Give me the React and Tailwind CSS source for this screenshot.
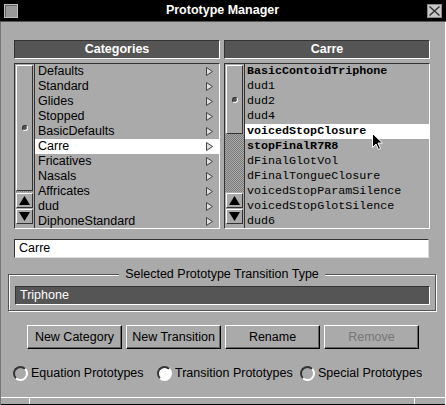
import { useState } from 'react'

const categories = [
  'Defaults',
  'Standard',
  'Glides',
  'Stopped',
  'BasicDefaults',
  'Carre',
  'Fricatives',
  'Nasals',
  'Affricates',
  'dud',
  'DiphoneStandard'
]

const transitions = [
  { name: 'BasicContoidTriphone', bold: true },
  { name: 'dud1' },
  { name: 'dud2' },
  { name: 'dud4' },
  { name: 'voicedStopClosure', bold: true },
  { name: 'stopFinalR7R8', bold: true },
  { name: 'dFinalGlotVol' },
  { name: 'dFinalTongueClosure' },
  { name: 'voicedStopParamSilence' },
  { name: 'voicedStopGlotSilence' },
  { name: 'dud6' }
]

const raised = 'border border-t-white border-l-white border-r-[#333] border-b-[#333]'
const sunken = 'border border-t-[#333] border-l-[#333] border-r-white border-b-white'

function ThumbDot() {
  return (
    <div className="w-[6px] h-[6px] rounded-full bg-[#555] border border-t-[#333] border-l-[#333] border-r-white border-b-white" />
  )
}

function ArrowButton({ down }) {
  return (
    <div className={`h-[15px] mt-[1px] mx-[1px] bg-[#aaa] flex items-center justify-center ${raised}`}>
      <svg width="11" height="9" viewBox="0 0 11 9">
        {down ? <path d="M0 0 H11 L5.5 9 Z" fill="#000" /> : <path d="M0 9 H11 L5.5 0 Z" fill="#000" />}
      </svg>
    </div>
  )
}

function SubArrow() {
  return (
    <svg width="7" height="9" viewBox="0 0 7 9">
      <path d="M0.5 0.5 L6.5 4.5 L0.5 8.5 Z" fill="#ddd" stroke="#444" strokeWidth="1" />
    </svg>
  )
}

function ScrollColumn({ thumb }) {
  return (
    <div className="w-[20px] shrink-0 flex flex-col border-r border-[#333] pb-[4px]">
      <div className={`${thumb} mt-[1px] mx-[1px] bg-[#aaa] flex items-center justify-center ${raised}`}>
        <ThumbDot />
      </div>
      <div className="flex-1 bg-[image:repeating-conic-gradient(#7a7a7a_0_25%,#aaa_0_50%)] bg-size-[2px_2px]" />
      <ArrowButton />
      <ArrowButton down />
    </div>
  )
}

export default function App() {
  const [category, setCategory] = useState('Carre')
  const [transition, setTransition] = useState('voicedStopClosure')
  const [mode, setMode] = useState('transition')

  return (
    <div className="w-[446px] h-[405px] bg-[#aaa] flex flex-col font-['Liberation_Sans',sans-serif] text-black relative overflow-hidden">
      {/* Title bar */}
      <div className="h-[22px] shrink-0 bg-black flex items-center px-[4px] border-b border-[#555]">
        <div className="w-[14px] h-[14px] border border-[#bbb] bg-[#999] shadow-[inset_1px_1px_0_#666]" />
        <div className="flex-1 text-center text-white font-bold text-[12.5px] leading-none">Prototype Manager</div>
        <div className="w-[15px] h-[14px] bg-[#c8c8c8] border border-[#888] flex items-center justify-center">
          <svg width="11" height="10" viewBox="0 0 11 10">
            <path d="M0.5 0.5 L10.5 9.5 M10.5 0.5 L0.5 9.5" stroke="#333" strokeWidth="1.4" />
          </svg>
        </div>
      </div>

      <div className="flex-1 flex flex-col border-l border-[#777] border-r border-r-white">
        {/* Lists */}
        <div className="flex gap-[4px] pl-[13px] mt-[18px]">
          <div className="w-[206px] flex flex-col">
            <div className={`h-[19px] bg-[#555] text-white font-bold text-[12.5px] flex items-center justify-center ${sunken}`}>
              Categories
            </div>
            <div className={`mt-[4px] h-[166px] flex ${sunken}`}>
              <ScrollColumn thumb="h-[126px]" />
              <div className="flex-1 overflow-hidden">
                {categories.map((c) => (
                  <div
                    key={c}
                    onClick={() => setCategory(c)}
                    className={`h-[15px] shrink-0 flex items-center justify-between pl-[3px] pr-[6px] text-[12.5px] leading-[15px] ${
                      category === c ? 'bg-white' : ''
                    }`}
                  >
                    <span>{c}</span>
                    <SubArrow />
                  </div>
                ))}
              </div>
            </div>
          </div>

          <div className="w-[206px] flex flex-col">
            <div className={`h-[19px] bg-[#555] text-white font-bold text-[12.5px] flex items-center justify-center ${sunken}`}>
              {category}
            </div>
            <div className={`mt-[4px] h-[166px] flex ${sunken}`}>
              <ScrollColumn thumb="h-[69px]" />
              <div className="flex-1 overflow-hidden font-['Liberation_Mono',monospace] text-[11.7px]">
                {transitions.map((t) => (
                  <div
                    key={t.name}
                    onClick={() => setTransition(t.name)}
                    className={`h-[15px] flex items-center pl-[2px] leading-[15px] ${t.bold ? 'font-bold' : ''} ${
                      transition === t.name ? 'bg-white' : ''
                    }`}
                  >
                    {t.name}
                  </div>
                ))}
              </div>
            </div>
          </div>
        </div>

        {/* Name field */}
        <div className="ml-[13px] mt-[10px] w-[415px] h-[19px] bg-white border border-t-[#333] border-l-[#333] border-r-[#ddd] border-b-[#ddd] flex items-center pl-[4px] text-[12.5px]">
          {category}
        </div>

        {/* Group box */}
        <div className="relative ml-[7px] mt-[16px] w-[428px] h-[37px] border border-[#555] shadow-[inset_1px_1px_0_#fff,1px_1px_0_#fff] pt-[11px] pl-[6px]">
          <div className="absolute -top-[8px] left-0 right-0 flex justify-center">
            <span className="bg-[#aaa] px-[6px] text-[12.5px] leading-[15px]">Selected Prototype Transition Type</span>
          </div>
          <div className={`w-[415px] h-[19px] bg-[#555] text-white flex items-center pl-[4px] text-[12.5px] ${sunken}`}>
            Triphone
          </div>
        </div>

        {/* Buttons */}
        <div className="flex justify-center gap-[4px] mt-[14px]">
          {['New Category', 'New Transition', 'Rename', 'Remove'].map((b) => (
            <button
              key={b}
              className={`w-[95px] h-[24px] bg-[#aaa] text-[12.5px] flex items-center justify-center border border-t-white border-l-white border-r-black border-b-black shadow-[inset_-1px_-1px_0_#666] ${
                b === 'Remove' ? 'text-[#777]' : 'text-black'
              }`}
            >
              {b}
            </button>
          ))}
        </div>

        {/* Radios */}
        <div className="flex items-center mt-[15px] pl-[12px] text-[12.5px]">
          {[
            ['equation', 'Equation Prototypes', 'w-[144px]'],
            ['transition', 'Transition Prototypes', 'w-[143px]'],
            ['special', 'Special Prototypes', '']
          ].map(([key, label, w]) => (
            <label key={key} onClick={() => setMode(key)} className={`flex items-center gap-[3px] ${w}`}>
              <span
                className={`w-[15px] h-[15px] rounded-full border-2 border-t-[#333] border-l-[#333] border-r-white border-b-white ${
                  mode === key ? 'bg-white' : 'bg-[#aaa]'
                }`}
              />
              <span>{label}</span>
            </label>
          ))}
        </div>

        <div className="flex-1" />

        {/* Frame bottom */}
        <div className="h-[8px] border-t border-white border-b border-b-black flex">
          <div className="w-[29px] border-r border-white" />
          <div className="flex-1 border-r border-white" />
          <div className="w-[30px]" />
        </div>
      </div>

      {/* Mouse pointer */}
      <svg className="absolute left-[372px] top-[133px]" width="12" height="18" viewBox="0 0 12 18">
        <path d="M0.5 0.5 L0.5 14.5 L4 11 L6.5 16.5 L8.5 15.5 L6 10 L10.5 10 Z" fill="#000" stroke="#fff" strokeWidth="1" />
      </svg>
    </div>
  )
}
